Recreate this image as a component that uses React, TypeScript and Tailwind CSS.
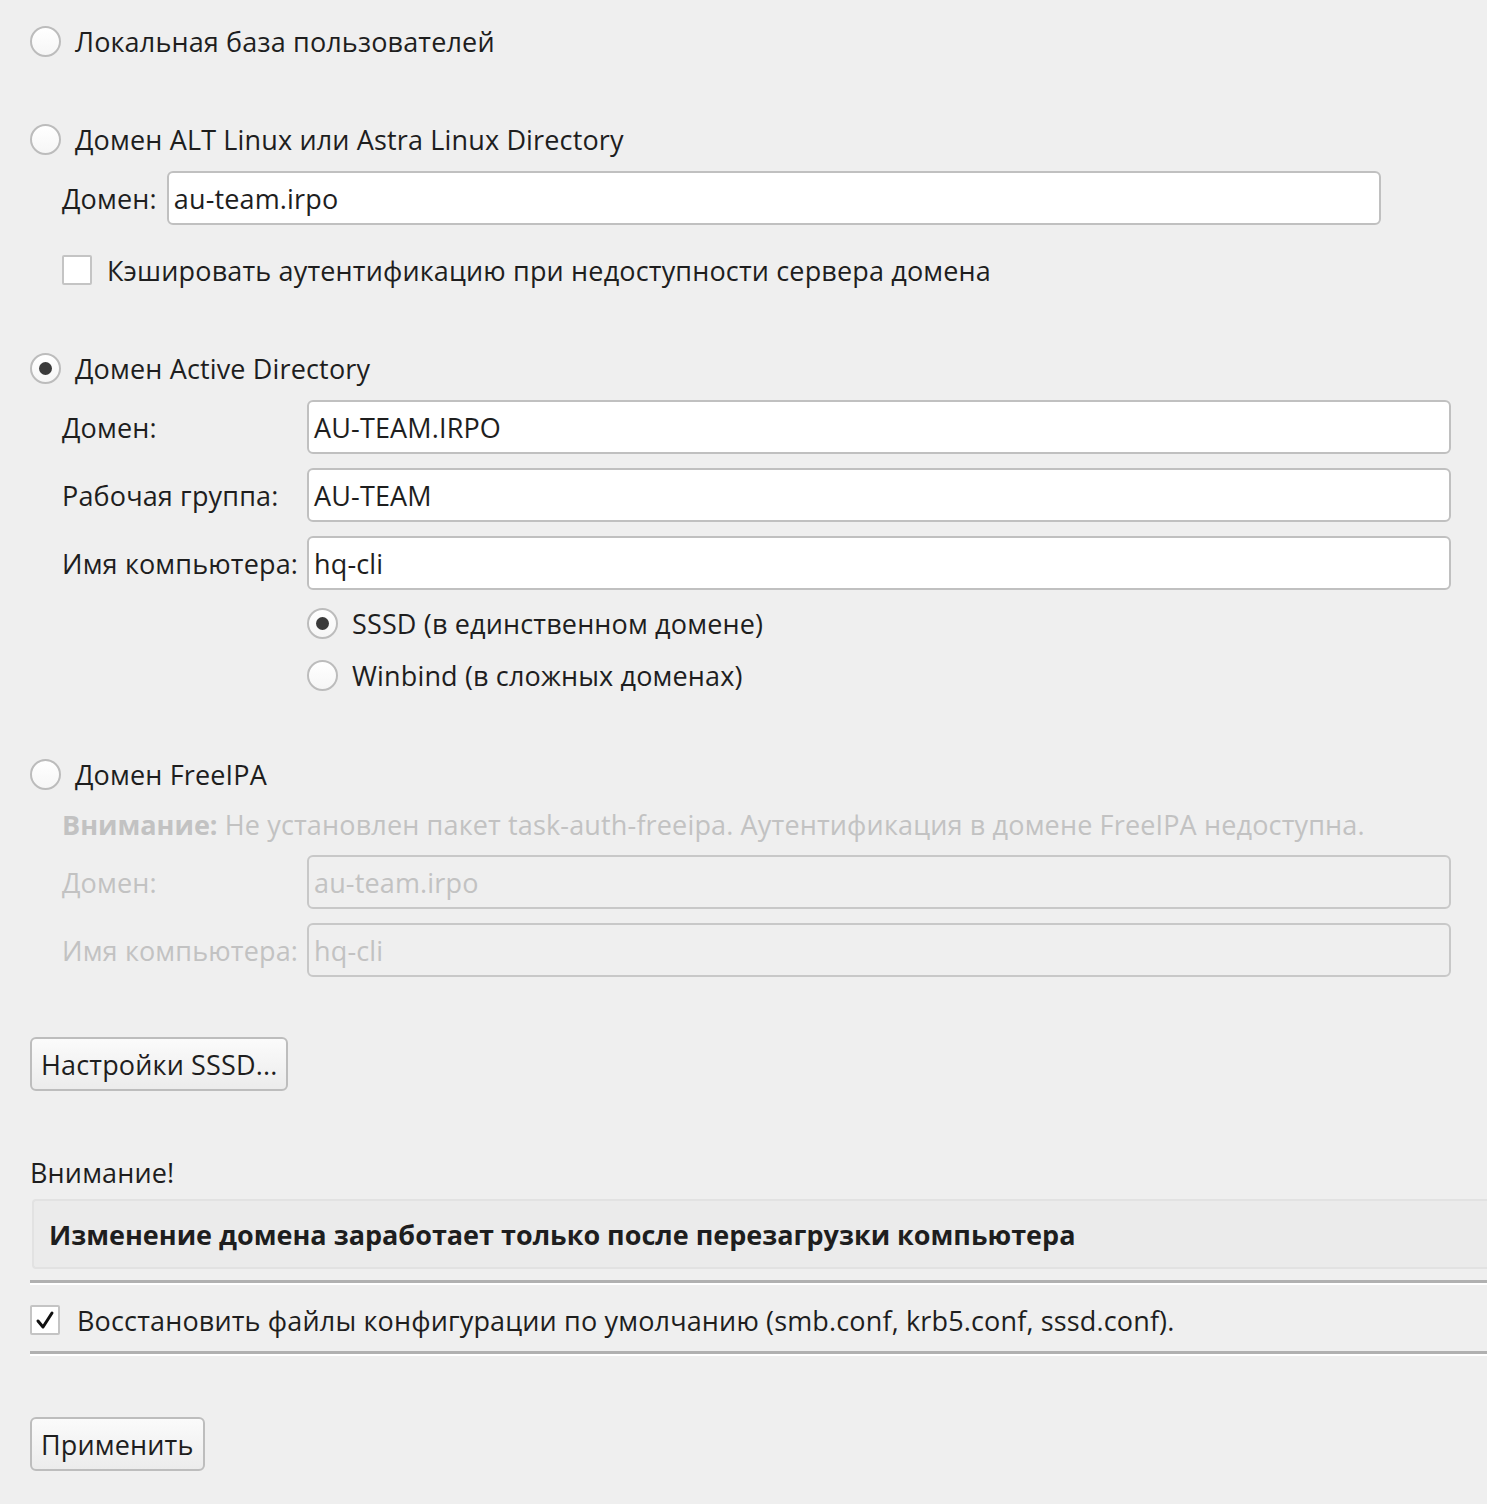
import React from 'react';

const Radio = ({ checked = false }: { checked?: boolean }) => (
  <span className="flex h-[31px] w-[31px] shrink-0 items-center justify-center rounded-full border-2 border-[#bcbcbc] bg-gradient-to-b from-white to-[#f6f6f6]">
    {checked && <span className="h-[13px] w-[13px] rounded-full bg-[#3a3a3a]" />}
  </span>
);

const Checkbox = ({ checked = false }: { checked?: boolean }) => (
  <span className="flex h-[30px] w-[30px] shrink-0 items-center justify-center rounded-[2px] border-2 border-[#c4c4c4] bg-white">
    {checked && (
      <svg width="20" height="20" viewBox="0 0 20 20" fill="none">
        <path d="M3 11l5 6L17 3" stroke="#111" strokeWidth="3" strokeLinecap="round" strokeLinejoin="round" />
      </svg>
    )}
  </span>
);

const Field = ({ value, disabled = false }: { value: string; disabled?: boolean }) => (
  <div
    className={`flex h-[54px] flex-1 items-center rounded-[6px] border-2 px-[5px] ${
      disabled ? 'border-[#c8c8c8] bg-[#efefef] text-[#c2c2c2]' : 'border-[#c0c0c0] bg-white text-[#1e1e1e]'
    }`}
  >
    {value}
  </div>
);

const Button = ({ label }: { label: string }) => (
  <button className="flex h-[54px] items-center rounded-[6px] border-2 border-[#bdbdbd] bg-gradient-to-b from-[#fbfbfb] to-[#ececec] px-[9px] text-[#1e1e1e]">
    {label}
  </button>
);

const Separator = () => (
  <div className="-mr-[30px] border-t-[3px] border-b-[2px] border-t-[#b0b0b0] border-b-white" />
);

export default function App() {
  return (
    <div
      className="min-h-[1504px] w-[1487px] overflow-hidden bg-[#efefef] pl-[30px] pt-[23px] text-[27px] leading-none tracking-[0.15px] text-[#1e1e1e]"
      style={{ fontFamily: '"Open Sans", "Noto Sans", sans-serif' }}
    >
      {/* Local */}
      <label className="flex h-[36px] items-center gap-[14px]">
        <Radio />
        <span>Локальная база пользователей</span>
      </label>

      {/* ALT domain */}
      <label className="mt-[62px] flex h-[36px] items-center gap-[14px]">
        <Radio />
        <span>Домен ALT Linux или Astra Linux Directory</span>
      </label>
      <div className="mt-[14px] flex items-center gap-[10px] pl-[32px] pr-[106px]">
        <span>Домен:</span>
        <Field value="au-team.irpo" />
      </div>
      <label className="mt-[27px] flex h-[36px] items-center gap-[15px] pl-[32px]">
        <Checkbox />
        <span>Кэшировать аутентификацию при недоступности сервера домена</span>
      </label>

      {/* Active Directory */}
      <label className="mt-[62px] flex h-[36px] items-center gap-[14px]">
        <Radio checked />
        <span>Домен Active Directory</span>
      </label>
      <div className="mt-[14px] grid grid-cols-[245px_1fr] gap-y-[14px] pl-[32px] pr-[36px]">
        <span className="flex items-center">Домен:</span>
        <Field value="AU-TEAM.IRPO" />
        <span className="flex items-center">Рабочая группа:</span>
        <Field value="AU-TEAM" />
        <span className="flex items-center">Имя компьютера:</span>
        <Field value="hq-cli" />
      </div>
      <div className="mt-[15px] pl-[277px]">
        <label className="flex h-[36px] items-center gap-[14px]">
          <Radio checked />
          <span>SSSD (в единственном домене)</span>
        </label>
        <label className="mt-[16px] flex h-[36px] items-center gap-[14px]">
          <Radio />
          <span>Winbind (в сложных доменах)</span>
        </label>
      </div>

      {/* FreeIPA */}
      <label className="mt-[63px] flex h-[36px] items-center gap-[14px]">
        <Radio />
        <span>Домен FreeIPA</span>
      </label>
      <div className="mt-[14px] flex h-[36px] items-center pl-[32px] text-[#c2c2c2]">
        <span>
          <b className="font-bold tracking-normal">Внимание:</b> Не установлен пакет task-auth-freeipa. Аутентификация в домене FreeIPA недоступна.
        </span>
      </div>
      <div className="mt-[13px] grid grid-cols-[245px_1fr] gap-y-[14px] pl-[32px] pr-[36px] text-[#c2c2c2]">
        <span className="flex items-center">Домен:</span>
        <Field value="au-team.irpo" disabled />
        <span className="flex items-center">Имя компьютера:</span>
        <Field value="hq-cli" disabled />
      </div>

      <div className="mt-[60px]">
        <Button label="Настройки SSSD..." />
      </div>

      {/* Warning */}
      <div className="mt-[63px] flex h-[36px] items-center">Внимание!</div>
      <div className="-mr-[30px] ml-[2px] mt-[9px] flex h-[70px] items-center rounded-l-[4px] border-2 border-r-0 border-[#e2e2e2] bg-[#ebebeb] pl-[15px] font-bold tracking-normal">
        Изменение домена заработает только после перезагрузки компьютера
      </div>
      <div className="mt-[11px]">
        <Separator />
      </div>
      <label className="mt-[17px] flex h-[36px] items-center gap-[17px]">
        <Checkbox checked />
        <span>Восстановить файлы конфигурации по умолчанию (smb.conf, krb5.conf, sssd.conf).</span>
      </label>
      <div className="mt-[13px]">
        <Separator />
      </div>

      <div className="mt-[61px]">
        <Button label="Применить" />
      </div>
    </div>
  );
}
